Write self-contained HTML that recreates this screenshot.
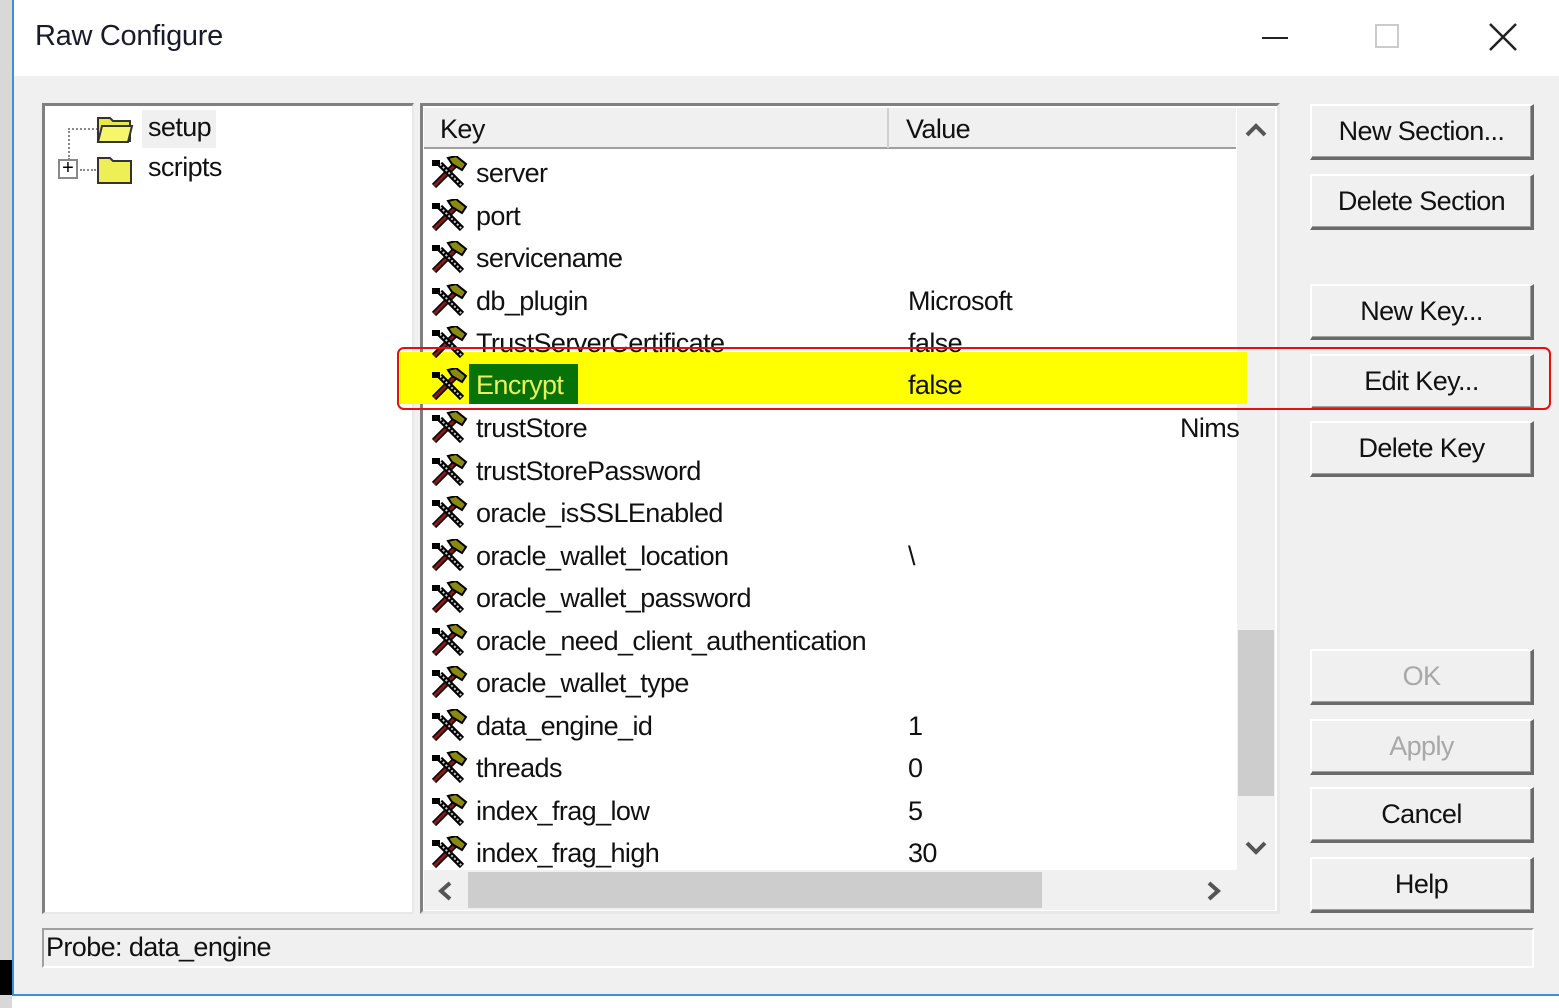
<!DOCTYPE html>
<html><head><meta charset="utf-8"><style>
*{margin:0;padding:0;box-sizing:border-box}
body{width:1559px;height:1008px;overflow:hidden;background:#fff;font-family:"Liberation Sans",sans-serif;position:relative}
.abs{position:absolute}
.txt{font-size:27px;color:#111;white-space:nowrap;letter-spacing:-0.6px}
.btn{position:absolute;left:1310px;width:224px;height:56px;background:#f0f0f0;border-top:2px solid #fff;border-left:2px solid #fff;border-right:3px solid #6a6a6a;border-bottom:3px solid #6a6a6a;box-shadow:inset -1px -1px 0 #a0a0a0;font-size:27px;text-align:center;line-height:50px;color:#111;letter-spacing:-0.6px}
.dis{color:#a8a8a8}
.row{position:absolute;left:430px;height:42px;font-size:27px;line-height:42px;color:#111;white-space:nowrap;letter-spacing:-0.6px}
.ic{position:absolute;left:0;top:4px}
.k{position:absolute;left:46px}
.v{position:absolute;left:478px}
</style></head><body>
<div class="abs" style="left:0;top:0;width:12px;height:1008px;background:#d8d8d8"></div>
<div class="abs" style="left:0;top:960px;width:12px;height:35px;background:#000"></div>
<div class="abs" style="left:12px;top:0;width:2px;height:996px;background:#3b8fdc"></div>
<div class="abs" style="left:12px;top:994px;width:1547px;height:2px;background:#3b8fdc"></div>
<div class="abs" style="left:14px;top:0;width:1545px;height:76px;background:#fff"></div>
<div class="abs txt" style="left:35px;top:20px;font-size:29px;color:#1a1a2a;letter-spacing:-0.3px">Raw Configure</div>
<div class="abs" style="left:1262px;top:37px;width:26px;height:2px;background:#222"></div>
<div class="abs" style="left:1375px;top:24px;width:24px;height:24px;border:2px solid #ccc"></div>
<svg class="abs" style="left:1488px;top:22px" width="30" height="30"><path d="M2 2L28 28M28 2L2 28" stroke="#222" stroke-width="2.5"/></svg>
<div class="abs" style="left:14px;top:76px;width:1545px;height:918px;background:#f0f0f0"></div>

<div class="abs" style="left:42px;top:103px;width:372px;height:811px;background:#fff;border-top:3px solid #808080;border-left:3px solid #808080;border-right:2px solid #e8e8e8;border-bottom:2px solid #e8e8e8"></div>
<div class="abs" style="left:68px;top:128px;width:30px;height:0;border-top:2px dotted #888"></div>
<div class="abs" style="left:68px;top:128px;height:32px;border-left:2px dotted #888"></div>
<div class="abs" style="left:58px;top:159px;width:20px;height:20px;border:2px solid #888;background:#fff;font-size:20px;line-height:15px;text-align:center;color:#000">+</div>
<div class="abs" style="left:80px;top:169px;width:16px;border-top:2px dotted #888"></div>
<svg class="abs" style="left:96px;top:112px" width="40" height="32"><path d="M2 6h12l3 3h17v20H2z" fill="#e8e84a" stroke="#333" stroke-width="2"/><path d="M6 14h30l-4 16H2z" fill="#f6f66a" stroke="#333" stroke-width="2"/></svg>
<svg class="abs" style="left:96px;top:152px" width="40" height="34"><path d="M2 6h12l3 3h18v22H2z" fill="#eeee55" stroke="#333" stroke-width="2"/></svg>
<div class="abs" style="left:142px;top:110px;width:74px;height:38px;background:#f0f0f0"></div>
<div class="abs txt" style="left:148px;top:112px">setup</div>
<div class="abs txt" style="left:148px;top:152px">scripts</div>

<div class="abs" style="left:420px;top:103px;width:860px;height:811px;background:#fff;border-top:3px solid #808080;border-left:3px solid #808080;border-right:3px solid #e8e8e8;border-bottom:3px solid #e8e8e8"></div>
<div class="abs" style="left:424px;top:108px;width:812px;height:41px;background:#f0f0f0;border-bottom:2px solid #a0a0a0"></div>
<div class="abs" style="left:887px;top:108px;width:2px;height:40px;background:#d0d0d0"></div>
<div class="abs txt" style="left:440px;top:114px">Key</div>
<div class="abs txt" style="left:906px;top:114px">Value</div>
<div class="abs" style="left:1237px;top:108px;width:38px;height:762px;background:#f0f0f0"></div>
<div class="abs" style="left:1238px;top:630px;width:36px;height:166px;background:#cdcdcd"></div>
<svg class="abs" style="left:1244px;top:122px" width="24" height="16"><path d="M3 13L12 4L21 13" stroke="#555" stroke-width="4" fill="none"/></svg>
<svg class="abs" style="left:1244px;top:840px" width="24" height="16"><path d="M3 3L12 12L21 3" stroke="#555" stroke-width="4" fill="none"/></svg>
<div class="abs" style="left:424px;top:870px;width:851px;height:40px;background:#f0f0f0"></div>
<div class="abs" style="left:468px;top:872px;width:574px;height:36px;background:#cdcdcd"></div>
<svg class="abs" style="left:436px;top:880px" width="18" height="22"><path d="M14 3L5 11L14 19" stroke="#555" stroke-width="4" fill="none"/></svg>
<svg class="abs" style="left:1205px;top:880px" width="18" height="22"><path d="M4 3L13 11L4 19" stroke="#555" stroke-width="4" fill="none"/></svg>

<div class="abs" style="left:400px;top:352px;width:847px;height:52px;background:#ffff00"></div>
<div class="abs" style="left:469px;top:364px;width:109px;height:40px;background:#077207"></div>

<svg width="0" height="0" style="position:absolute"><defs><g id="t"><path d="M4 30L26 8" stroke="#000" stroke-width="6"/><path d="M4 30L26 8" stroke="#8a1a1a" stroke-width="3"/><path d="M10 8L32 30" stroke="#000" stroke-width="6"/><path d="M10 8L32 30" stroke="#ccc" stroke-width="2" stroke-dasharray="2 2"/><path d="M18 2l8-2 10 8-4 6-10-6z" fill="#8a8a10" stroke="#000" stroke-width="2"/><path d="M2 4h8v6H2z" fill="#000"/></g></defs></svg>

<div class="row" style="top:152px"><svg class="ic" width="38" height="34"><use href="#t"/></svg><span class="k">server</span></div>
<div class="row" style="top:195px"><svg class="ic" width="38" height="34"><use href="#t"/></svg><span class="k">port</span></div>
<div class="row" style="top:237px"><svg class="ic" width="38" height="34"><use href="#t"/></svg><span class="k">servicename</span></div>
<div class="row" style="top:280px"><svg class="ic" width="38" height="34"><use href="#t"/></svg><span class="k">db_plugin</span><span class="v">Microsoft</span></div>
<div class="row" style="top:322px"><svg class="ic" width="38" height="34"><use href="#t"/></svg><span class="k">TrustServerCertificate</span><span class="v">false</span></div>
<div class="row" style="top:364px"><svg class="ic" width="38" height="34"><use href="#t"/></svg><span class="k" style="color:#e8f060">Encrypt</span><span class="v">false</span></div>
<div class="row" style="top:407px"><svg class="ic" width="38" height="34"><use href="#t"/></svg><span class="k">trustStore</span><span class="v" style="left:750px">Nims</span></div>
<div class="row" style="top:450px"><svg class="ic" width="38" height="34"><use href="#t"/></svg><span class="k">trustStorePassword</span></div>
<div class="row" style="top:492px"><svg class="ic" width="38" height="34"><use href="#t"/></svg><span class="k">oracle_isSSLEnabled</span></div>
<div class="row" style="top:535px"><svg class="ic" width="38" height="34"><use href="#t"/></svg><span class="k">oracle_wallet_location</span><span class="v">\</span></div>
<div class="row" style="top:577px"><svg class="ic" width="38" height="34"><use href="#t"/></svg><span class="k">oracle_wallet_password</span></div>
<div class="row" style="top:620px"><svg class="ic" width="38" height="34"><use href="#t"/></svg><span class="k">oracle_need_client_authentication</span></div>
<div class="row" style="top:662px"><svg class="ic" width="38" height="34"><use href="#t"/></svg><span class="k">oracle_wallet_type</span></div>
<div class="row" style="top:705px"><svg class="ic" width="38" height="34"><use href="#t"/></svg><span class="k">data_engine_id</span><span class="v">1</span></div>
<div class="row" style="top:747px"><svg class="ic" width="38" height="34"><use href="#t"/></svg><span class="k">threads</span><span class="v">0</span></div>
<div class="row" style="top:790px"><svg class="ic" width="38" height="34"><use href="#t"/></svg><span class="k">index_frag_low</span><span class="v">5</span></div>
<div class="row" style="top:832px"><svg class="ic" width="38" height="34"><use href="#t"/></svg><span class="k">index_frag_high</span><span class="v">30</span></div>

<div class="btn" style="top:104px">New Section...</div>
<div class="btn" style="top:174px">Delete Section</div>
<div class="btn" style="top:284px">New Key...</div>
<div class="btn" style="top:354px">Edit Key...</div>
<div class="btn" style="top:421px">Delete Key</div>
<div class="btn dis" style="top:649px">OK</div>
<div class="btn dis" style="top:719px">Apply</div>
<div class="btn" style="top:787px">Cancel</div>
<div class="btn" style="top:857px">Help</div>

<div class="abs" style="left:397px;top:347px;width:1154px;height:63px;border:2px solid #e41010;border-radius:7px"></div>

<div class="abs" style="left:42px;top:928px;width:1492px;height:40px;border-top:2px solid #a0a0a0;border-left:2px solid #a0a0a0;border-right:2px solid #fff;border-bottom:2px solid #fff"></div>
<div class="abs txt" style="left:46px;top:932px">Probe: data_engine</div>
</body></html>
